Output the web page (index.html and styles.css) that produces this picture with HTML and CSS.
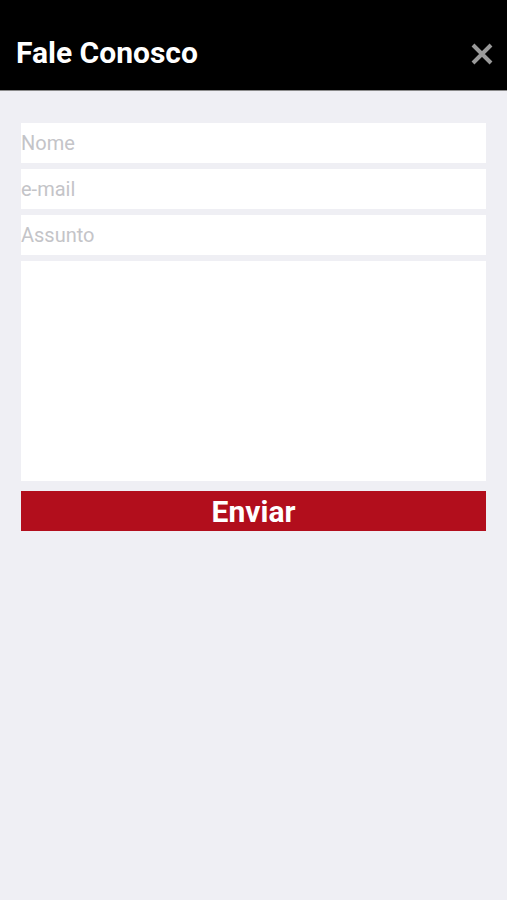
FILE: index.html
```html
<!DOCTYPE html>
<html lang="pt">
<head>
    <meta charset="UTF-8">
    <meta name="viewport" content="width=device-width, initial-scale=1.0">
    <title>Fale Conosco</title>
    <link rel="stylesheet" href="styles.css">
</head>
<body>
    <header class="top-bar">
        <h1 class="top-title">Fale Conosco</h1>
        <button class="close-button" aria-label="Fechar">
            <svg width="22" height="22" viewBox="0 0 22 22">
                <path d="M2 2 L20 20 M20 2 L2 20" stroke="#9a9a9a" stroke-width="4" stroke-linecap="butt"/>
            </svg>
        </button>
    </header>

    <form class="contact-form">
        <input class="field" type="text" placeholder="Nome">
        <input class="field" type="email" placeholder="e-mail">
        <input class="field" type="text" placeholder="Assunto">
        <textarea class="field message"></textarea>
        <button type="button" class="send-button">Enviar</button>
    </form>
</body>
</html>
```

FILE: styles.css
```css
:root {
    --bar-color: #000000;
    --background-color: #efeff4;
    --field-color: #FFFFFF;
    --accent-color: #b20e1c;
    --placeholder-color: #c4c4c8;
}

* {
    margin: 0;
    padding: 0;
    box-sizing: border-box;
}

body {
    font-family: Roboto, 'Liberation Sans', sans-serif;
    background-color: var(--background-color);
    min-height: 100vh;
}

.top-bar {
    height: 91px;
    background-color: var(--bar-color);
    border-bottom: 1px solid #8a8a8a;
    display: flex;
    align-items: flex-end;
    justify-content: space-between;
    padding: 0 14px 20px 16px;
}

.top-title {
    color: #FFFFFF;
    font-size: 30px;
    font-weight: 700;
    line-height: 34px;
}

.close-button {
    background: none;
    border: none;
    display: flex;
    margin-bottom: 5px;
    cursor: pointer;
}

.contact-form {
    display: flex;
    flex-direction: column;
    gap: 6px;
    padding: 32px 21px 0 21px;
}

.field {
    height: 40px;
    border: none;
    outline: none;
    background-color: var(--field-color);
    font-family: Roboto, 'Liberation Sans', sans-serif;
    font-size: 20px;
    color: #333;
    padding: 0;
}

.field::placeholder {
    color: var(--placeholder-color);
}

.message {
    height: 220px;
    resize: none;
}

.send-button {
    margin-top: 4px;
    height: 40px;
    border: none;
    background-color: var(--accent-color);
    color: #FFFFFF;
    font-family: Roboto, 'Liberation Sans', sans-serif;
    font-size: 30px;
    font-weight: 700;
    cursor: pointer;
}
```
